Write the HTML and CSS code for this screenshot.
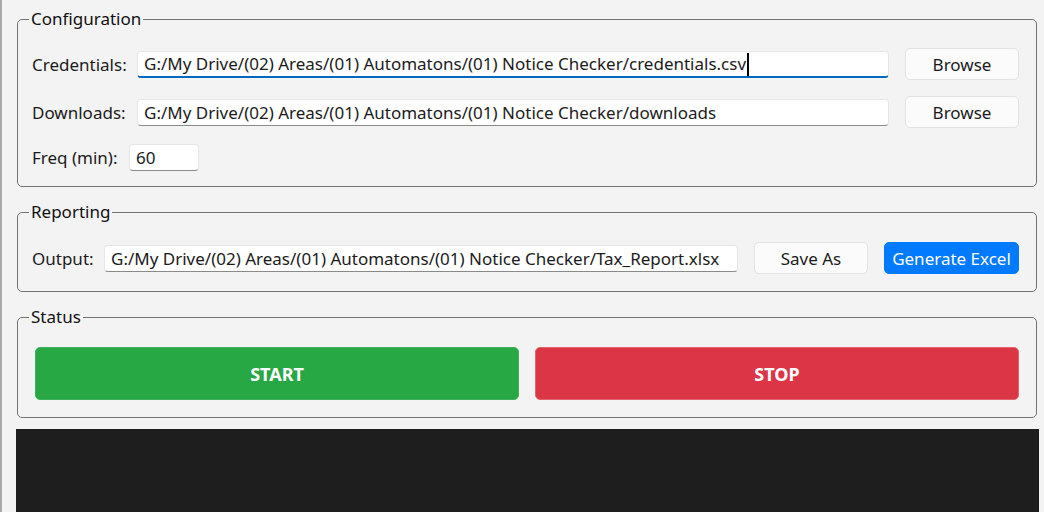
FILE: index.html
```html
<!DOCTYPE html>
<html lang="en">
<head>
  <meta charset="UTF-8">
  <title>Notice Checker</title>
  <link rel="stylesheet" href="styles.css">
</head>
<body>
  <div class="app">

    <fieldset class="group group-config">
      <legend>Configuration</legend>
      <div class="row">
        <span class="label label-path">Credentials:</span>
        <div class="entry focused">G:/My Drive/(02) Areas/(01) Automatons/(01) Notice Checker/credentials.csv<span class="caret"></span></div>
        <button class="btn">Browse</button>
      </div>
      <div class="row">
        <span class="label label-path">Downloads:</span>
        <div class="entry">G:/My Drive/(02) Areas/(01) Automatons/(01) Notice Checker/downloads</div>
        <button class="btn">Browse</button>
      </div>
      <div class="row row-short">
        <span class="label label-freq">Freq (min):</span>
        <div class="entry entry-small">60</div>
      </div>
    </fieldset>

    <fieldset class="group">
      <legend>Reporting</legend>
      <div class="row">
        <span class="label label-output">Output:</span>
        <div class="entry">G:/My Drive/(02) Areas/(01) Automatons/(01) Notice Checker/Tax_Report.xlsx</div>
        <button class="btn">Save As</button>
        <button class="btn btn-primary">Generate Excel</button>
      </div>
    </fieldset>

    <fieldset class="group">
      <legend>Status</legend>
      <div class="controls">
        <button class="big start">START</button>
        <button class="big stop">STOP</button>
      </div>
    </fieldset>

    <div class="log"></div>
  </div>
</body>
</html>
```
FILE: styles.css
```css
html, body {
  height: 100%;
}

body {
  margin: 0;
  background-color: #f3f3f3;
  border-left: 2px solid #a9a9a9;
  font-family: "Noto Sans", sans-serif;
  font-size: 17px;
  color: #1b1b1b;
  overflow: hidden;
}

.app {
  display: flex;
  flex-direction: column;
  height: 100%;
  padding: 8px 5px 0 14px;
  box-sizing: border-box;
}

/* labelled frames */
.group {
  margin: 0 2px 14px 1px;
  padding: 0 17px 17px 14px;
  border: 1px solid #737373;
  border-radius: 5px;
}

.group legend {
  margin-left: -3px;
  padding: 0 2px;
  line-height: 22px;
  color: #111;
}

.group-config {
  padding-bottom: 15px;
}

.row {
  display: flex;
  align-items: center;
  gap: 16px;
  height: 32px;
  margin-top: 16px;
}

.row:first-of-type {
  margin-top: 19px;
}

.group-config .row:first-of-type {
  margin-top: 18px;
}

.row-short {
  height: 27px;
}

.label {
  flex: none;
  margin-right: -16px;
  white-space: nowrap;
}

.label-path { width: 105px; }
.label-freq { width: 97px; }
.label-output { width: 72px; }

.entry {
  flex: 1;
  height: 27px;
  box-sizing: border-box;
  padding: 0 6px;
  background-color: #fff;
  border: 1px solid #e6e6e6;
  border-bottom-color: #8a8a8a;
  border-radius: 4px;
  line-height: 25px;
  white-space: nowrap;
  overflow: hidden;
}

.entry.focused {
  border-bottom: 2px solid #0067c0;
  line-height: 24px;
}

.entry-small {
  flex: none;
  width: 70px;
}

.caret {
  display: inline-block;
  width: 2px;
  height: 23px;
  margin-left: 1px;
  background-color: #000;
  vertical-align: -6px;
}

.btn {
  flex: none;
  width: 114px;
  height: 32px;
  padding: 0;
  font-family: inherit;
  font-size: 17px;
  color: #1b1b1b;
  background-color: #fbfbfb;
  border: 1px solid #e3e3e3;
  border-radius: 5px;
  cursor: pointer;
}

.btn:hover {
  background-color: #f6f6f6;
}

.btn-primary {
  width: 135px;
  color: #fff;
  background-color: #007bff;
  border-color: #007bff;
}

.btn-primary:hover {
  background-color: #0069d9;
}

/* start / stop */
.controls {
  display: flex;
  gap: 16px;
  margin-top: 19px;
  padding-left: 3px;
}

.big {
  flex: 1;
  height: 53px;
  font-family: inherit;
  font-size: 18px;
  font-weight: 700;
  color: #fff;
  border-radius: 5px;
  cursor: pointer;
}

.start {
  background-color: #28a745;
  border: 1px solid #3fb25b;
}

.stop {
  background-color: #dc3545;
  border: 1px solid #e26370;
}

.log {
  flex: 1;
  margin-top: -3px;
  background-color: #1e1e1e;
}
```
